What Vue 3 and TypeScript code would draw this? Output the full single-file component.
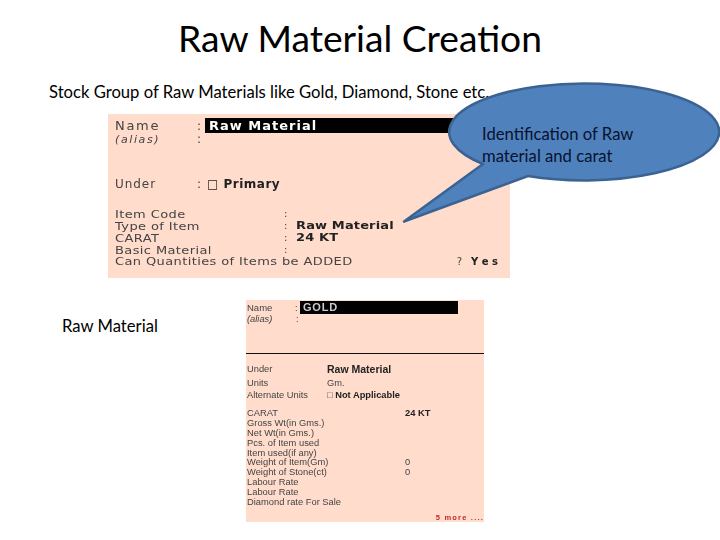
<script setup lang="ts">
interface Row { label: string; value?: string }
const itemRows: Row[] = [
  { label: 'Item Code' },
  { label: 'Type of Item', value: 'Raw Material' },
  { label: 'CARAT', value: '24 KT' },
  { label: 'Basic Material' },
]
const goldRows: Row[] = [
  { label: 'CARAT', value: '24 KT' },
  { label: 'Gross Wt(in Gms.)' },
  { label: 'Net Wt(in Gms.)' },
  { label: 'Pcs. of Item used' },
  { label: 'Item used(if any)' },
  { label: 'Weight of Item(Gm)', value: '0' },
  { label: 'Weight of Stone(ct)', value: '0' },
  { label: 'Labour Rate' },
  { label: 'Labour Rate' },
  { label: 'Diamond rate For Sale' },
]
</script>

<template>
  <div class="slide">
    <h1 class="title">Raw Material Creation</h1>
    <p class="subtitle">Stock Group of Raw Materials like Gold, Diamond, Stone etc.</p>

    <section class="panel-one">
      <div class="name-row">
        <span class="name-label">Name</span>
        <span class="name-colon">:</span>
        <span class="name-bar">Raw Material</span>
      </div>
      <div class="alias-row"><em class="alias">(alias)</em><span>:</span></div>
      <div class="under-row">
        <span class="under-label">Under</span>
        <span class="under-colon">:</span>
        <b class="under-value">&#9633; Primary</b>
      </div>
      <div class="item-rows">
        <div v-for="r in itemRows" :key="r.label" class="item-row">
          <span class="item-label"><span class="wide">{{ r.label }}</span></span>
          <span class="item-colon">:</span>
          <b class="wide">{{ r.value }}</b>
        </div>
        <div class="qty-row">
          <span class="wide">Can Quantities of Items be ADDED</span>
          <span class="qty-value">? <b>Y e s</b></span>
        </div>
      </div>
    </section>

    <div class="lower">
      <div class="lower-label">Raw Material</div>
      <section class="panel-two">
        <div class="g-name">
          <span class="g-label">Name</span><span class="g-colon">:</span><span class="g-bar">GOLD</span>
        </div>
        <div class="g-alias"><em>(alias)</em><span>:</span></div>
        <div class="g-rule"></div>
        <div class="g-pair g-under"><span>Under</span><b>Raw Material</b></div>
        <div class="g-pair g-units"><span>Units</span><span>Gm.</span></div>
        <div class="g-pair g-alt"><span>Alternate Units</span><span><span>&#9633;</span> <b>Not Applicable</b></span></div>
        <div class="g-list">
          <div v-for="(r, i) in goldRows" :key="i" class="g-row">
            <span class="g-cell"><span class="slight">{{ r.label }}</span></span>
            <b v-if="r.value === '24 KT'" class="slight">{{ r.value }}</b>
            <span v-else class="slight">{{ r.value }}</span>
          </div>
        </div>
        <div class="g-more">5 more ....</div>
      </section>
    </div>

    <div class="callout">
      <svg class="callout-shape" viewBox="0 0 720 540" width="720" height="540" aria-hidden="true">
        <path d="M483 164 A135 48.5 0 1 1 528 176 L404 221.500 Z" fill="#4f81bd" stroke="#3b6391" stroke-width="2.500" stroke-linejoin="round"/>
      </svg>
      <div class="callout-text">Identification of Raw<br>material and carat</div>
    </div>
  </div>
</template>

<style>
html, body { margin: 0; background: #fff; }
</style>

<style scoped>
.slide {
  position: relative;
  width: 720px;
  height: 540px;
  overflow: hidden;
  background: #fff;
  color: #000;
  font-family: Lato, "Open Sans", sans-serif;
}
.title {
  margin: 0;
  padding-top: 16px;
  height: 44px;
  line-height: 44px;
  font-size: 37.200px;
  font-weight: 400;
  text-align: center;
}
.subtitle {
  margin: 0;
  padding: 22px 0 0 49px;
  height: 20px;
  line-height: 20px;
  font-size: 16.650px;
  white-space: nowrap;
}
.panel-one {
  box-sizing: border-box;
  margin: 12px 0 0 108px;
  width: 402px;
  height: 164px;
  padding-top: 4px;
  background: #ffdccb;
  font-family: "DejaVu Sans", sans-serif;
  font-size: 12px;
  letter-spacing: 0.95px;
  color: #444;
  filter: blur(0.3px);
}
.wide {
  display: inline-block;
  font-size: 10px;
  letter-spacing: 0.3px;
  white-space: nowrap;
  transform: scaleX(1.3);
  transform-origin: left center;
}
.name-row { display: flex; height: 15px; align-items: center; padding-left: 7px; }
.name-label { width: 82px; font-size: 13px; letter-spacing: 1.7px; }
.name-colon { width: 8px; }
.name-bar {
  box-sizing: border-box;
  width: 252px;
  height: 15px;
  line-height: 15px;
  padding-left: 4px;
  background: #000;
  color: #fff;
  font-weight: 700;
  font-size: 13px;
  letter-spacing: 1px;
}
.alias-row { display: flex; height: 13px; line-height: 13px; padding-left: 7px; }
.alias { width: 82px; font-size: 11px; letter-spacing: 1.6px; }
.under-row { display: flex; margin-top: 32px; height: 13px; line-height: 13px; padding-left: 7px; }
.under-label { width: 82px; }
.under-colon { width: 10px; }
.under-value { color: #222; font-size: 12px; letter-spacing: 0.5px; }
.item-rows { margin-top: 17px; }
.item-row { display: flex; height: 12px; line-height: 12px; padding-left: 7px; }
.item-label { width: 169px; flex: none; }
.item-colon { width: 12px; flex: none; font-size: 10px; }
.item-row b { color: #222; letter-spacing: 0.1px; }
.qty-row { display: flex; height: 12px; line-height: 12px; padding: 0 12px 0 7px; justify-content: space-between; }
.qty-value { font-size: 10px; }
.qty-value b { color: #222; margin-left: 4px; letter-spacing: 0; }
.lower { display: flex; align-items: flex-start; margin-top: 22px; }
.lower-label {
  box-sizing: content-box;
  width: 184px;
  padding: 17px 0 0 62px;
  height: 18px;
  line-height: 18px;
  font-size: 16.650px;
}
.panel-two {
  box-sizing: border-box;
  position: relative;
  width: 238px;
  height: 222px;
  padding-top: 1px;
  background: #ffdccb;
  font-family: "Liberation Sans", sans-serif;
  font-size: 9.300px;
  color: #444;
  filter: blur(0.35px);
}
.slight {
  display: inline-block;
  font-size: 8.500px;
  white-space: nowrap;
  transform: scaleX(1.1);
  transform-origin: left center;
}
.g-name { display: flex; height: 13px; align-items: center; }
.g-label { width: 48px; padding-left: 1px; font-size: 9.500px; }
.g-colon { width: 5px; }
.g-bar {
  box-sizing: border-box;
  width: 158px;
  height: 13px;
  line-height: 13px;
  padding-left: 3px;
  background: #000;
  color: #ccc;
  font-size: 11px;
  font-weight: 700;
  letter-spacing: 0.8px;
}
.g-alias { display: flex; height: 10px; line-height: 10px; }
.g-alias em { width: 49px; padding-left: 1px; }
.g-rule { margin-top: 29px; height: 1px; background: #111; }
.g-pair { display: flex; height: 11px; line-height: 11px; padding-left: 1px; }
.g-pair > :first-child { width: 80px; flex: none; }
.g-under { margin-top: 10px; margin-bottom: 1px; height: 12px; }
.g-under b { color: #222; font-size: 10.500px; }
.g-units { margin-top: 2px; }
.g-alt { margin-top: 1px; }
.g-pair b { color: #222; }
.g-list { margin-top: 8px; }
.g-row { display: flex; height: 9.900px; line-height: 9.900px; padding-left: 1px; }
.g-cell { width: 158px; flex: none; }
.g-row b { color: #222; }
.g-more {
  position: absolute;
  right: 0;
  bottom: 0;
  height: 9px;
  line-height: 9px;
  font-size: 7.500px;
  font-weight: 700;
  letter-spacing: 1.2px;
  white-space: nowrap;
  color: #c02a2a;
}
.callout { position: absolute; inset: 0; pointer-events: none; }
.callout-shape { display: block; }
.callout-text {
  position: absolute;
  left: 482px;
  top: 123px;
  line-height: 22px;
  font-size: 16.650px;
  color: #08122e;
  white-space: nowrap;
}
</style>
